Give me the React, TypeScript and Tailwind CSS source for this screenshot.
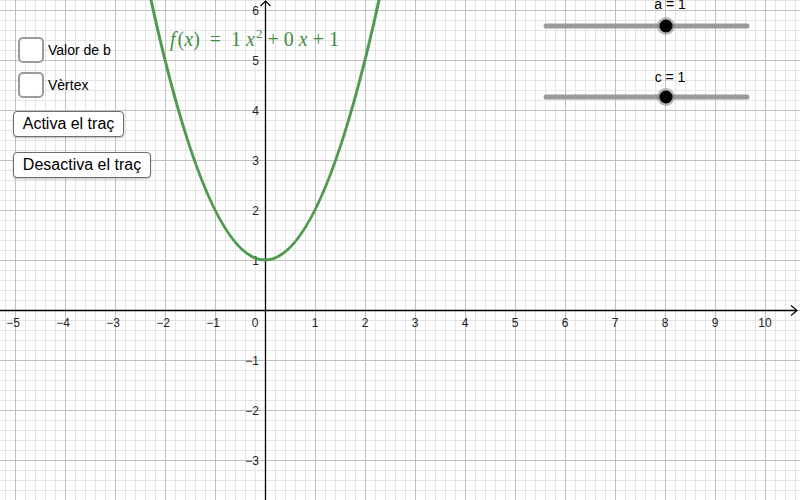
import React from 'react';

const W = 800;
const H = 500;
const OX = 265;
const OY = 310;
const U = 50;

const minorX = Array.from({ length: 80 }, (_, i) => 5 + i * 10);
const minorY = Array.from({ length: 51 }, (_, i) => i * 10);
const majorX = Array.from({ length: 16 }, (_, i) => 15 + i * 50);
const majorY = Array.from({ length: 10 }, (_, i) => 10 + i * 50);

const xTicks = [-5, -4, -3, -2, -1, 1, 2, 3, 4, 5, 6, 7, 8, 9, 10];
const yTicks = [6, 5, 4, 3, 2, 1, -1, -2, -3];

const fmt = (n: number) => (n < 0 ? `\u2212${-n}` : `${n}`);

const GREEN = '#4f9a4f';

function Graph() {
  return (
    <svg width={W} height={H} className="absolute inset-0" style={{ fontFamily: '"Liberation Sans", Arial, sans-serif' }}>
      {minorX.map((x) => (
        <line key={`mx${x}`} x1={x + 0.5} y1={0} x2={x + 0.5} y2={H} stroke="#e4e4e4" strokeWidth={1} />
      ))}
      {minorY.map((y) => (
        <line key={`my${y}`} x1={0} y1={y + 0.5} x2={W} y2={y + 0.5} stroke="#e4e4e4" strokeWidth={1} />
      ))}
      {majorX.map((x) => (
        <line key={`Mx${x}`} x1={x + 0.5} y1={0} x2={x + 0.5} y2={H} stroke="#c0c0c0" strokeWidth={1} />
      ))}
      {majorY.map((y) => (
        <line key={`My${y}`} x1={0} y1={y + 0.5} x2={W} y2={y + 0.5} stroke="#c0c0c0" strokeWidth={1} />
      ))}

      {/* axes */}
      <line x1={0} y1={OY + 0.5} x2={797} y2={OY + 0.5} stroke="#000" strokeWidth={1.3} />
      <path d="M 791 305.5 L 797 310.5 L 791 315.5" fill="none" stroke="#000" strokeWidth={1.2} />
      <line x1={OX + 0.5} y1={1} x2={OX + 0.5} y2={H} stroke="#000" strokeWidth={1.3} />
      <path d="M 260.5 6 L 265.5 1 L 270.5 6" fill="none" stroke="#000" strokeWidth={1.2} />

      {xTicks.map((n) => (
        <text key={`xt${n}`} x={OX + n * U + (n < 0 ? -2 : 0)} y={327} fontSize={12} textAnchor="middle" fill="#222">
          {fmt(n)}
        </text>
      ))}
      <text x={255} y={327} fontSize={12} textAnchor="middle" fill="#222">0</text>
      {yTicks.map((n) => (
        <text key={`yt${n}`} x={259} y={OY - n * U + 4.5} fontSize={12} textAnchor="end" fill="#222">
          {fmt(n)}
        </text>
      ))}

      {/* f(x) = x^2 + 1 */}
      <path d="M 145 -28 Q 265 548 385 -28" fill="none" stroke={GREEN} strokeWidth={3} />

      {/* sliders */}
      {[26, 97].map((y) => (
        <g key={`s${y}`}>
          <line x1={546} y1={y} x2={747} y2={y} stroke="#9a9a9a" strokeWidth={5} strokeLinecap="round" />
          <circle cx={666} cy={y} r={9} fill="#8a8a8a" fillOpacity={0.6} />
          <circle cx={666} cy={y} r={6.5} fill="#000" />
        </g>
      ))}
      <text x={670} y={9} fontSize={14} textAnchor="middle" fill="#000">a = 1</text>
      <text x={670} y={82} fontSize={14} textAnchor="middle" fill="#000">c = 1</text>
    </svg>
  );
}

function Formula() {
  return (
    <div
      className="absolute left-[170px] top-[29px] flex items-baseline text-[20px] leading-none text-[#3f8f3f] whitespace-nowrap"
      style={{ fontFamily: '"Liberation Serif", "Times New Roman", serif' }}
    >
      <span className="italic">f</span>
      <span className="ml-[2px]">(</span>
      <span className="italic">x</span>
      <span>)</span>
      <span className="mx-[10px]">=</span>
      <span>1</span>
      <span className="italic ml-[5px]">x</span>
      <span className="relative -top-[8px] ml-[1px] text-[13px]">2</span>
      <span className="mx-[5px]">+</span>
      <span>0</span>
      <span className="italic ml-[5px]">x</span>
      <span className="mx-[5px]">+</span>
      <span>1</span>
    </div>
  );
}

function Check({ label }: { label: string }) {
  return (
    <div className="ml-[5px] flex items-center gap-[4px]">
      <div className="w-[26px] h-[26px] rounded-[5px] border-2 border-[#9b9b9b] bg-white" />
      <span className="text-[14px] text-black">{label}</span>
    </div>
  );
}

function Btn({ width, label }: { width: number; label: string }) {
  return (
    <button
      className="h-[26px] rounded-[4px] border border-[#6d6d6d] bg-white text-[16px] text-black shadow-[0_1px_2px_rgba(0,0,0,0.25)] flex items-center justify-center leading-none"
      style={{ width }}
    >
      {label}
    </button>
  );
}

export default function App() {
  return (
    <div
      className="relative w-[800px] h-[500px] bg-white overflow-hidden"
      style={{ fontFamily: '"Liberation Sans", Arial, sans-serif' }}
    >
      <Graph />
      <Formula />
      <div className="absolute left-[13px] top-[37px] flex flex-col items-start">
        <div className="flex flex-col gap-[9px]">
          <Check label="Valor de b" />
          <Check label="Vèrtex" />
        </div>
        <div className="mt-[13px] flex flex-col items-start gap-[15px]">
          <Btn width={111} label="Activa el traç" />
          <Btn width={138} label="Desactiva el traç" />
        </div>
      </div>
    </div>
  );
}
